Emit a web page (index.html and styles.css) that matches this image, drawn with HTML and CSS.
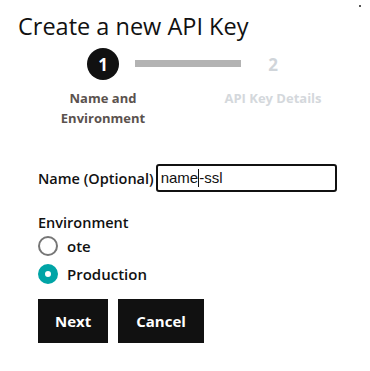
FILE: index.html
```html
<!DOCTYPE html>
<html lang="en">
<head>
<meta charset="UTF-8">
<meta name="viewport" content="width=device-width, initial-scale=1.0">
<title>Create a new API Key</title>
<link rel="stylesheet" href="styles.css">
</head>
<body>
<div class="dialog">
  <span class="close-dot"></span>
  <h1 class="title">Create a new API Key</h1>

  <div class="stepper">
    <div class="step step-active">
      <div class="step-num">1</div>
      <div class="step-label">Name and<br>Environment</div>
    </div>
    <div class="step-bar"></div>
    <div class="step step-next">
      <div class="step-num">2</div>
      <div class="step-label">API Key Details</div>
    </div>
  </div>

  <form class="key-form">
    <div class="name-row">
      <label class="field-label" for="key-name">Name (Optional)</label>
      <div class="text-input" id="key-name">name<span class="caret"></span>-ssl</div>
    </div>

    <div class="env-group">
      <div class="field-label">Environment</div>
      <label class="radio-row">
        <span class="radio"></span>
        <span>ote</span>
      </label>
      <label class="radio-row">
        <span class="radio radio-checked"></span>
        <span>Production</span>
      </label>
    </div>

    <div class="actions">
      <button type="button" class="btn">Next</button>
      <button type="button" class="btn">Cancel</button>
    </div>
  </form>
</div>
</body>
</html>
```

FILE: styles.css
```css
body {
  margin: 0;
  background-color: white;
  font-family: 'Open Sans', sans-serif;
  color: #111;
}
.dialog {
  position: relative;
  padding: 12px 18px 0 18px;
}
.close-dot {
  position: absolute;
  top: 5px;
  left: 359px;
  width: 2px;
  height: 2px;
  background-color: #555;
}
.title {
  margin: 0;
  font-size: 23.5px;
  font-weight: 400;
  line-height: 28px;
  color: #111;
}
.stepper {
  display: flex;
  align-items: flex-start;
  margin-top: 8px;
}
.step {
  width: 130px;
  display: flex;
  flex-direction: column;
  align-items: center;
}
.step-active {
  margin-left: 20px;
  margin-right: -33px;
}
.step-next {
  margin-left: -33px;
}
.step-num {
  width: 32px;
  height: 32px;
  border-radius: 50%;
  display: flex;
  align-items: center;
  justify-content: center;
  font-size: 17px;
  font-weight: 700;
}
.step-active .step-num {
  background-color: #111;
  color: white;
}
.step-next .step-num {
  color: #d0d5da;
}
.step-label {
  margin-top: 8px;
  font-size: 13px;
  font-weight: 700;
  line-height: 20px;
  text-align: center;
}
.step-active .step-label {
  color: #5b524e;
}
.step-next .step-label {
  color: #d4d8dc;
}
.step-bar {
  width: 106px;
  height: 7px;
  margin-top: 12px;
  background-color: #b3b3b3;
}
.key-form {
  padding-left: 20px;
  margin-top: 36px;
}
.name-row {
  display: flex;
  align-items: center;
}
.field-label {
  font-size: 14.5px;
  font-weight: 600;
  color: #111;
}
.text-input {
  width: 174px;
  height: 24px;
  margin-left: 2px;
  padding-left: 3px;
  border: 2px solid #111;
  border-radius: 3px;
  font-family: 'Liberation Sans', Arial, sans-serif;
  font-size: 15px;
  line-height: 24px;
}
.caret {
  display: inline-block;
  width: 1px;
  height: 18px;
  vertical-align: -4px;
  background-color: #111;
}
.env-group {
  margin-top: 21px;
}
.radio-row {
  display: flex;
  align-items: center;
  gap: 9px;
  height: 28px;
  font-size: 15px;
  font-weight: 600;
}
.radio {
  width: 16px;
  height: 16px;
  border: 2px solid #767676;
  border-radius: 50%;
  box-sizing: content-box;
}
.radio-checked {
  width: 6px;
  height: 6px;
  border: 7px solid #00a4a6;
  background-color: white;
}
.actions {
  display: flex;
  gap: 10px;
  margin-top: 11px;
}
.btn {
  height: 44px;
  padding: 0 17px;
  border: none;
  background-color: #111;
  color: white;
  font-family: 'Open Sans', sans-serif;
  font-size: 15px;
  font-weight: 700;
}
.btn + .btn {
  padding: 0 18px;
}
```
